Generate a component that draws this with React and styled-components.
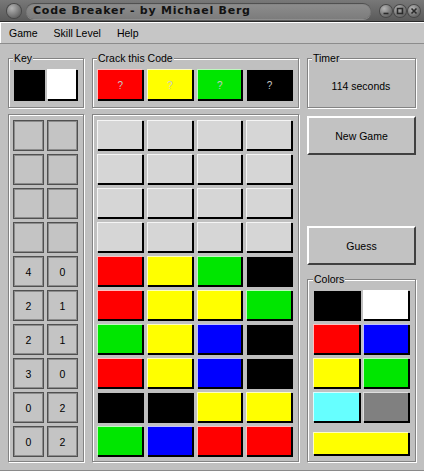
import React from "react";
import styled, { createGlobalStyle, css } from "styled-components";

const GlobalStyle = createGlobalStyle`
  html, body {
    margin: 0;
    padding: 0;
    background: #c0c0c0;
  }
  body {
    font-family: "Liberation Sans", Arial, sans-serif;
  }
`;

const PALETTE = {
  black: "#000000",
  white: "#ffffff",
  red: "#ff0000",
  blue: "#0000ff",
  yellow: "#ffff00",
  green: "#00e600",
  cyan: "#66ffff",
  grey: "#808080",
};

const GUESSES = [
  null,
  null,
  null,
  null,
  { pegs: ["red", "yellow", "green", "black"], score: [4, 0] },
  { pegs: ["red", "yellow", "yellow", "green"], score: [2, 1] },
  { pegs: ["green", "yellow", "blue", "black"], score: [2, 1] },
  { pegs: ["red", "yellow", "blue", "black"], score: [3, 0] },
  { pegs: ["black", "black", "yellow", "yellow"], score: [0, 2] },
  { pegs: ["green", "blue", "red", "red"], score: [0, 2] },
];

const SECRET = ["red", "yellow", "green", "black"];
const COLOR_CHOICES = ["black", "white", "red", "blue", "yellow", "green", "cyan", "grey"];

const raised = css`
  box-sizing: border-box;
  box-shadow: inset 1px 1px 0 rgba(255, 255, 255, 0.75), inset -2px -2px 0 #000;
`;

const etched = css`
  border: 1px solid #838383;
  box-shadow: inset 1px 1px 0 #fff, 1px 1px 0 #fff;
`;

const Window = styled.div`
  width: 424px;
  height: 471px;
  background: #c0c0c0;
  display: flex;
  flex-direction: column;
  box-sizing: border-box;
  border-bottom: 1px solid #8a8a8a;
  overflow: hidden;
`;

const TitleBar = styled.div`
  height: 22px;
  flex: none;
  display: flex;
  align-items: center;
  padding: 0 4px 0 7px;
  gap: 3px;
  background: linear-gradient(#787878, #5a5a5a);
  border-bottom: 1px solid #2a2a2a;
  box-sizing: border-box;
`;

const Knob = styled.div`
  width: ${(p) => p.$size}px;
  height: ${(p) => p.$size}px;
  border-radius: 50%;
  flex: none;
  display: flex;
  align-items: center;
  justify-content: center;
  background: radial-gradient(circle at 35% 30%, #b4b4b4, #6a6a6a 70%, #4a4a4a);
  box-shadow: 0 0 0 1px #474747;
`;

const TitlePill = styled.div`
  flex: 1;
  height: 16px;
  margin: 0 6px 0 2px;
  border-radius: 8px;
  background: linear-gradient(#8e8e8e, #7c7c7c);
  box-shadow: inset 0 1px 1px #4a4a4a, 0 1px 0 #8e8e8e;
  display: flex;
  align-items: center;
  padding-left: 7px;
  font-family: "DejaVu Sans", Verdana, sans-serif;
  font-size: 11px;
  font-weight: bold;
  letter-spacing: 0.75px;
  color: #121212;
`;

const Buttons = styled.div`
  display: flex;
  gap: 2px;
`;

const MenuBar = styled.div`
  height: 22px;
  flex: none;
  display: flex;
  align-items: center;
  gap: 16px;
  padding-left: 9px;
  font-size: 10.5px;
  color: #000;
  background: #c6c6c6;
  border-bottom: 1px solid #8c8c8c;
  box-shadow: inset 1px 1px 0 #fff;
  box-sizing: border-box;
`;

const Content = styled.div`
  display: grid;
  grid-template-columns: 76px 207px 109px;
  grid-template-rows: 57px auto;
  column-gap: 8px;
  row-gap: 6px;
  padding: 7px 8px 0;
`;

const Group = styled.fieldset`
  ${etched};
  margin: 0;
  padding: 4px 5px 5px 4px;
  min-width: 0;
  box-sizing: border-box;
  display: flex;
  flex-direction: column;
`;

const Legend = styled.legend`
  padding: 0 1px;
  font-size: 10.5px;
  line-height: 14px;
  background: #c0c0c0;
  position: relative;
`;

const SwatchRow = styled.div`
  display: grid;
  grid-template-columns: repeat(${(p) => p.$count}, 1fr);
  gap: ${(p) => p.$gap}px;
`;

const Swatch = styled.div`
  ${raised};
  height: ${(p) => p.$h || 32}px;
  background: ${(p) => PALETTE[p.$color]};
  display: flex;
  align-items: center;
  justify-content: center;
  font-size: 10px;
  color: #c8c8c8;
`;

const TimerText = styled.div`
  flex: 1;
  display: flex;
  align-items: center;
  justify-content: center;
  font-size: 10.5px;
  padding-top: 1px;
`;

const Panel = styled.div`
  ${etched};
  padding: 5px 5px 4px 4px;
  display: grid;
  grid-template-columns: repeat(${(p) => p.$cols}, 1fr);
  grid-auto-rows: 31px;
  gap: 3px;
  box-sizing: border-box;
`;

const ScoreCell = styled.div`
  box-sizing: border-box;
  border: 1px solid #505050;
  box-shadow: inset 0 0 0 1px #8c8c8c;
  background: #c4c4c4;
  display: flex;
  align-items: center;
  justify-content: center;
  font-size: 10.5px;
  color: #000;
`;

const Peg = styled.div`
  ${raised};
  background: ${(p) => (p.$color ? PALETTE[p.$color] : "#d6d6d6")};
`;

const SideColumn = styled.div`
  display: flex;
  flex-direction: column;
`;

const ActionButton = styled.button`
  height: 39px;
  margin-top: ${(p) => p.$top};
  flex: none;
  box-sizing: border-box;
  border: 2px solid;
  border-color: #fff #404040 #404040 #fff;
  background: #c2c2c2;
  font-family: "Liberation Sans", Arial, sans-serif;
  font-size: 10.5px;
  color: #000;
  padding: 0;
`;

const ColorsGroup = styled(Group)`
  margin-top: 7px;
  padding-right: 5px;
  padding-left: 5px;
`;

const ColorGrid = styled.div`
  display: grid;
  grid-template-columns: 1fr 1fr;
  grid-auto-rows: 31px;
  gap: 3px 2px;
`;

const Selected = styled(Swatch)`
  margin-top: 9px;
`;

function WindowButton({ children }) {
  return (
    <Knob $size={12}>
      <svg width="8" height="8" viewBox="0 0 8 8" fill="none" stroke="#2a2a2a" strokeWidth="1.6">
        {children}
      </svg>
    </Knob>
  );
}

export default function App() {
  return (
    <Window>
      <GlobalStyle />
      <TitleBar>
        <Knob $size={14} />
        <TitlePill>Code Breaker - by Michael Berg</TitlePill>
        <Buttons>
          <WindowButton>
            <path d="M1.5 6.5h5" />
          </WindowButton>
          <WindowButton>
            <rect x="1.5" y="1.5" width="5" height="5" />
          </WindowButton>
          <WindowButton>
            <path d="M1.5 1.5l5 5M6.5 1.5l-5 5" />
          </WindowButton>
        </Buttons>
      </TitleBar>

      <MenuBar>
        <span>Game</span>
        <span>Skill Level</span>
        <span>Help</span>
      </MenuBar>

      <Content>
        <Group>
          <Legend>Key</Legend>
          <SwatchRow $count={2} $gap={2}>
            <Swatch $color="black" />
            <Swatch $color="white" />
          </SwatchRow>
        </Group>

        <Group>
          <Legend>Crack this Code</Legend>
          <SwatchRow $count={4} $gap={3}>
            {SECRET.map((c, i) => (
              <Swatch key={i} $color={c}>
                ?
              </Swatch>
            ))}
          </SwatchRow>
        </Group>

        <Group>
          <Legend>Timer</Legend>
          <TimerText>114 seconds</TimerText>
        </Group>

        <Panel $cols={2}>
          {GUESSES.map((g, i) => (
            <React.Fragment key={i}>
              <ScoreCell>{g ? g.score[0] : ""}</ScoreCell>
              <ScoreCell>{g ? g.score[1] : ""}</ScoreCell>
            </React.Fragment>
          ))}
        </Panel>

        <Panel $cols={4}>
          {GUESSES.map((g, i) =>
            [0, 1, 2, 3].map((j) => <Peg key={`${i}-${j}`} $color={g ? g.pegs[j] : null} />)
          )}
        </Panel>

        <SideColumn>
          <ActionButton $top="2px">New Game</ActionButton>
          <ActionButton $top="auto">Guess</ActionButton>
          <ColorsGroup>
            <Legend>Colors</Legend>
            <ColorGrid>
              {COLOR_CHOICES.map((c) => (
                <Swatch key={c} $color={c} $h={31} />
              ))}
            </ColorGrid>
            <Selected $color="yellow" $h={24} />
          </ColorsGroup>
        </SideColumn>
      </Content>
    </Window>
  );
}
